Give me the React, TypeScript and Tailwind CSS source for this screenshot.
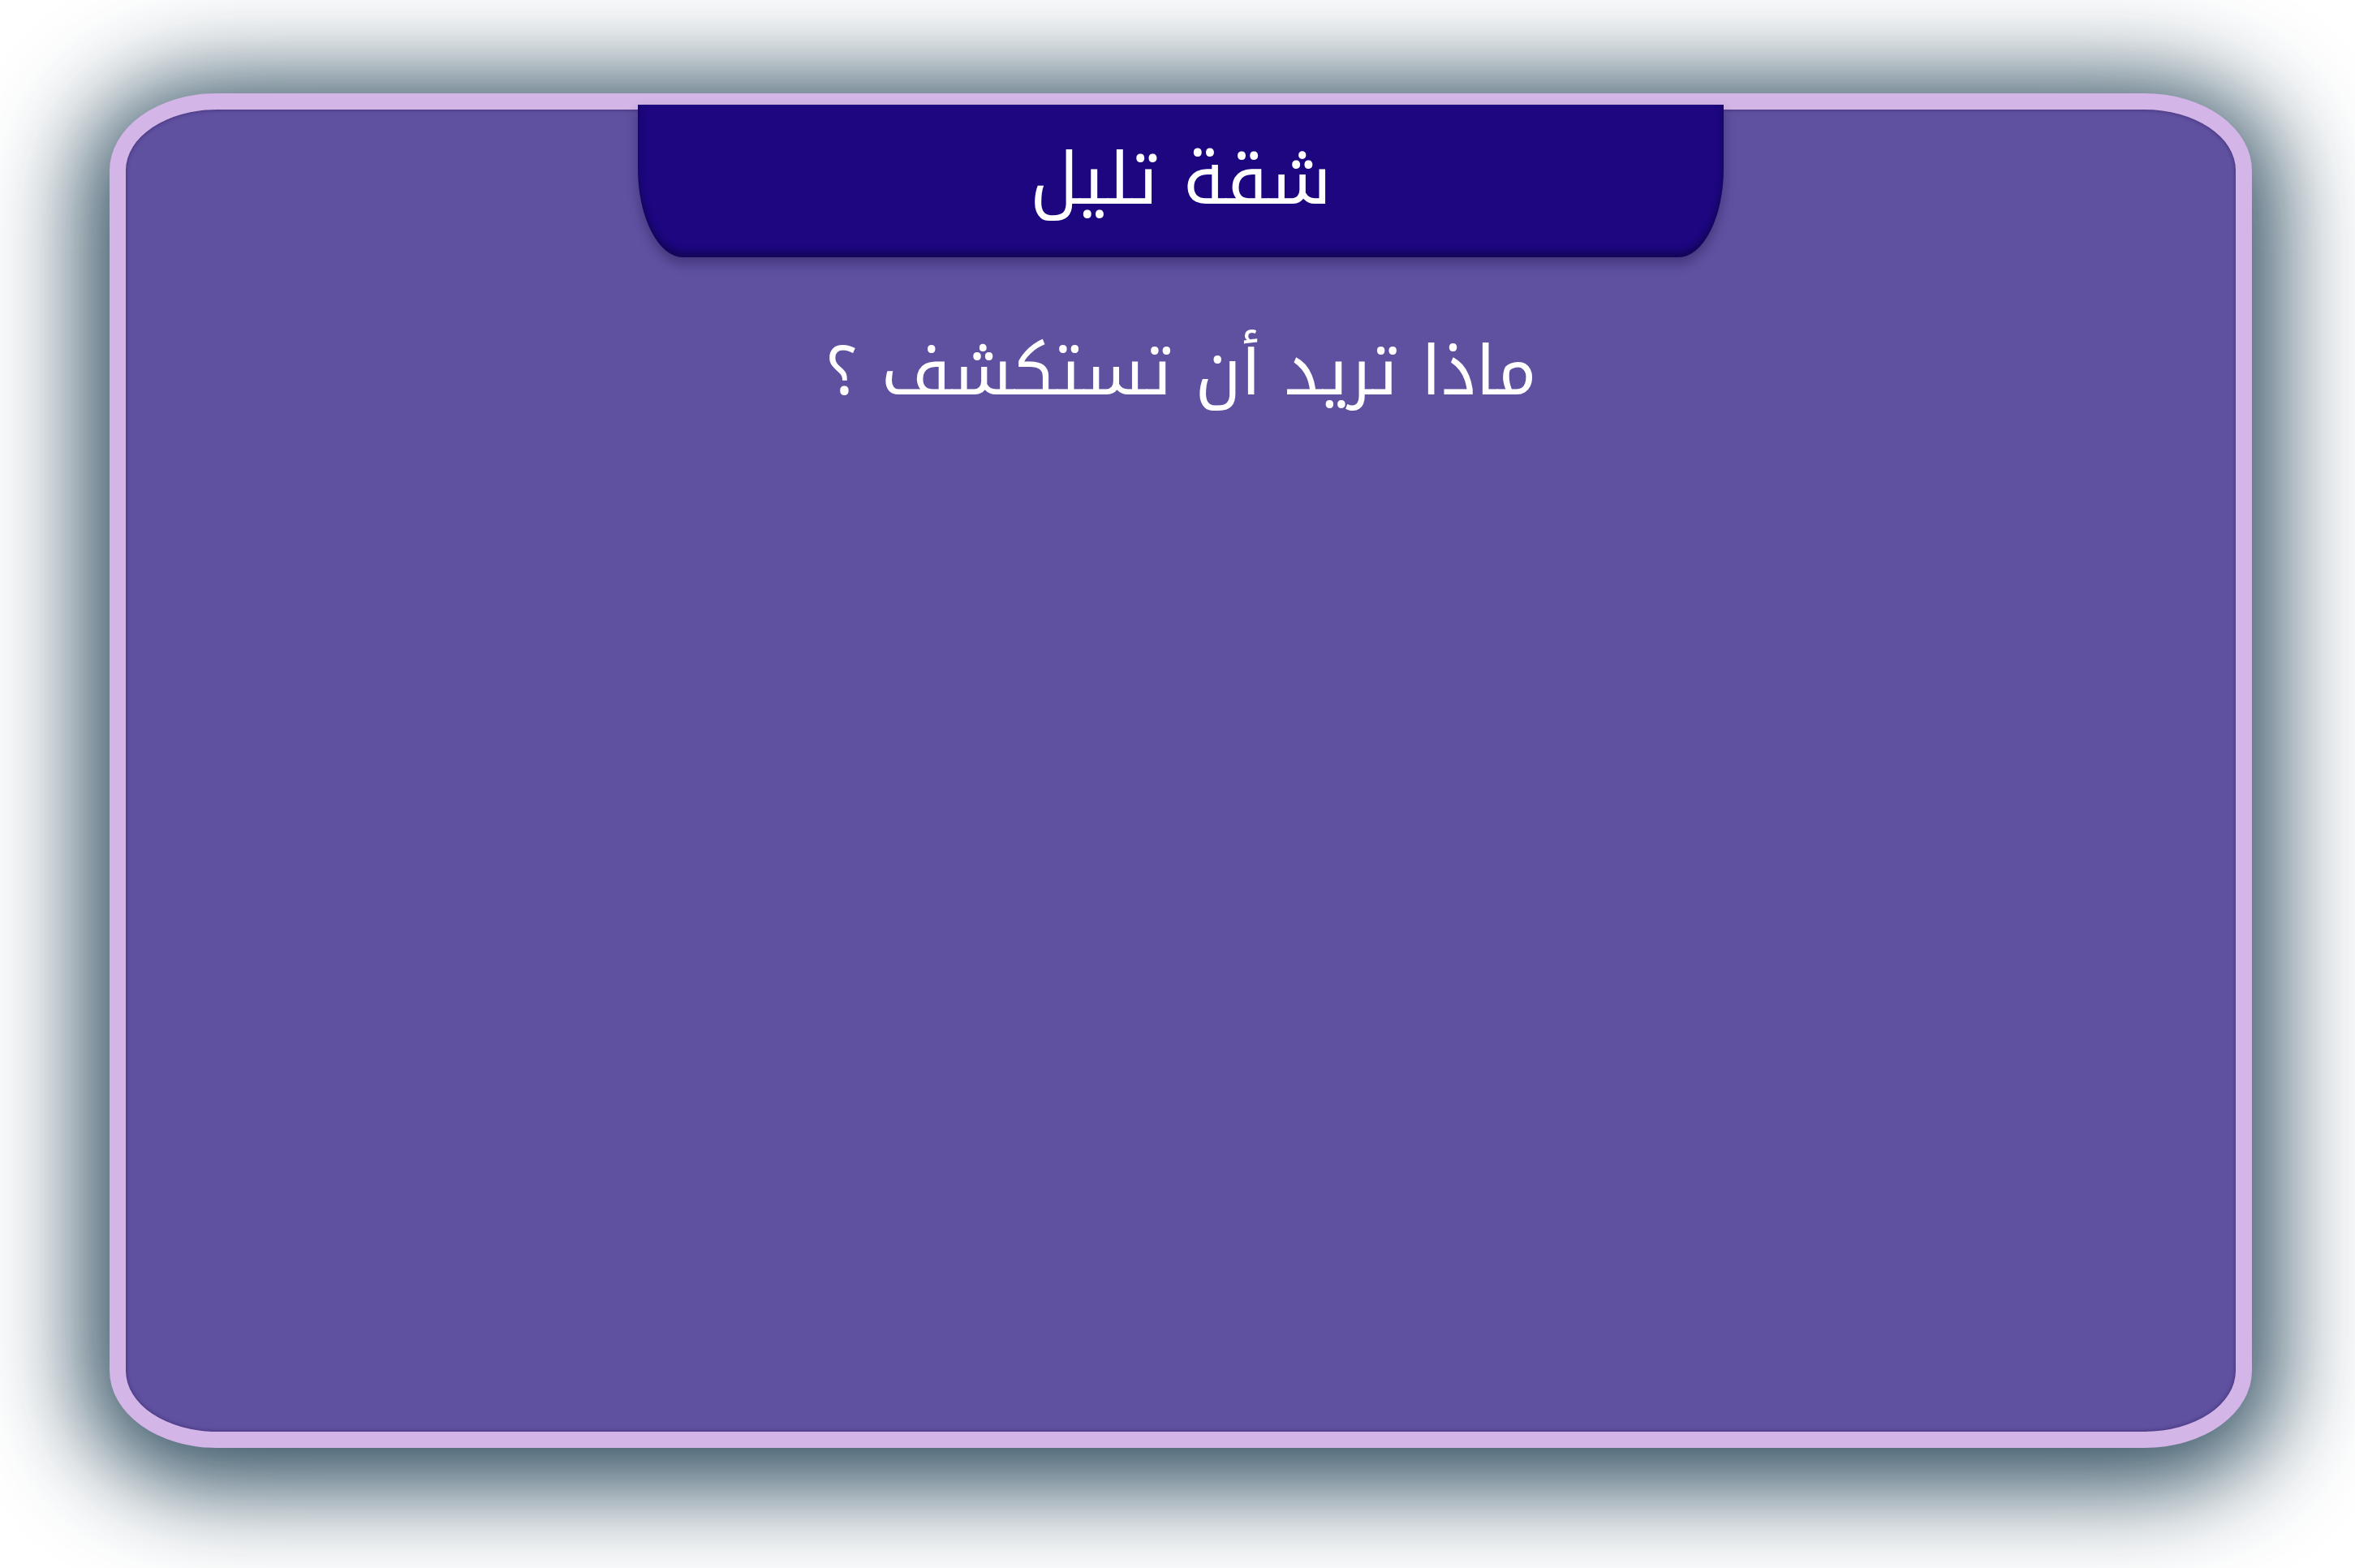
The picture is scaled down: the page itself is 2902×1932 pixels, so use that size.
export default function App() {
  return (
    <div className="w-full h-[1932px] bg-white pt-[115px] pl-[135px] overflow-hidden">
      <div
        className="w-[2640px] h-[1669px] border-[20px] border-[#d3b5e7] bg-[#5f51a0] rounded-[132px/95px] shadow-[0_16px_120px_30px_rgba(30,62,82,0.95),inset_0_0_5px_rgba(50,25,90,0.7)] flex flex-col items-center"
        style={{ fontFamily: '"Noto Kufi Arabic", "DejaVu Sans", sans-serif' }}
      >
        {/* title tab */}
        <div className="-mt-[6px] w-[1338px] h-[188px] bg-[#1d0680] rounded-b-[56px_110px] shadow-[0_8px_14px_rgba(20,10,60,0.35),inset_0_-6px_8px_rgba(0,0,0,0.35)] flex items-center justify-center">
          <h1 dir="rtl" className="text-white text-[88px] leading-none pb-[2px]">شقة تليل</h1>
        </div>

        <p dir="rtl" className="mt-[99px] text-white text-[84px] leading-none">ماذا تريد أن تستكشف ؟</p>
      </div>
    </div>
  )
}
